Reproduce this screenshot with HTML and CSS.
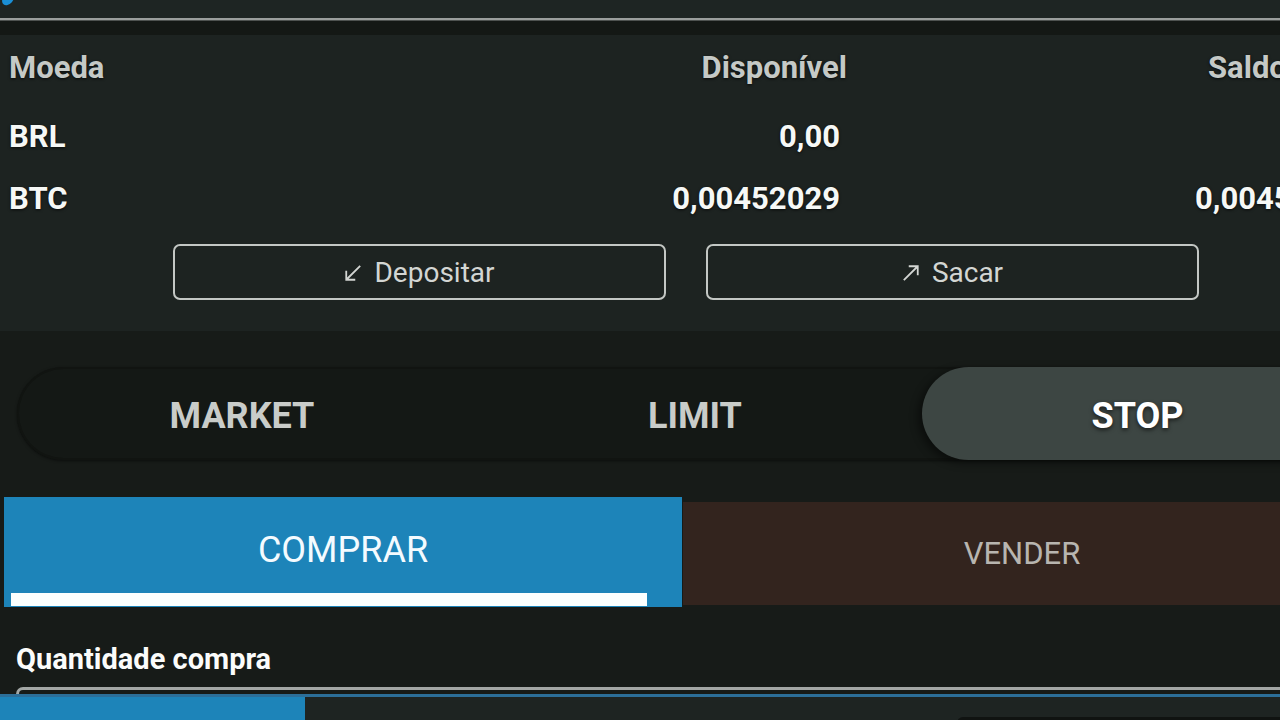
FILE: index.html
```html
<!DOCTYPE html>
<html lang="pt-BR">
<head>
<meta charset="utf-8">
<title>Carteira</title>
<link rel="stylesheet" href="styles.css">
</head>
<body>
<div class="topbar"><div class="blob"></div></div>
<div class="rule"></div>
<div class="gap"></div>

<section class="wallet">
  <div class="balances">
    <div class="hdr">Moeda</div>
    <div class="hdr num">Disponível</div>
    <div class="hdr saldo">Saldo</div>

    <div class="val">BRL</div>
    <div class="val num">0,00</div>
    <div class="val saldo"></div>

    <div class="val">BTC</div>
    <div class="val num">0,00452029</div>
    <div class="val saldo">0,00452029</div>
  </div>
  <div class="actions">
    <button class="act">
      <svg class="arrow" viewBox="0 0 20 20" width="20" height="20"><path d="M18 2 L2.5 17.5 M2.5 7.5 V17.5 H12.5" fill="none" stroke="currentColor" stroke-width="2"/></svg>
      Depositar
    </button>
    <button class="act">
      <svg class="arrow" viewBox="0 0 20 20" width="20" height="20"><path d="M2 18 L17.5 2.5 M7.5 2.5 H17.5 V12.5" fill="none" stroke="currentColor" stroke-width="2"/></svg>
      Sacar
    </button>
  </div>
</section>

<div class="modes">
  <div class="mode">MARKET</div>
  <div class="mode">LIMIT</div>
  <div class="mode active">STOP</div>
</div>

<div class="tabs">
  <div class="tab buy">
    <div class="tab-label">COMPRAR</div>
    <div class="indicator"></div>
  </div>
  <div class="tab sell">VENDER</div>
</div>

<div class="field-label">Quantidade compra</div>
<div class="input"></div>

<div class="sheet">
  <div class="sheet-left"></div>
  <div class="sheet-right"><div class="sheet-knob"></div></div>
</div>
</body>
</html>
```

FILE: styles.css
```css
html, body {
  margin: 0;
  padding: 0;
}
body {
  width: 1280px;
  height: 720px;
  overflow: hidden;
  background: #171b18;
  font-family: Roboto, "Noto Sans", "Liberation Sans", sans-serif;
}

.topbar {
  height: 18px;
  background: #1e2523;
  overflow: hidden;
}
.blob {
  width: 10px;
  height: 14px;
  margin: -8px 0 0 3px;
  background: #1a8fd6;
  border-radius: 50%;
  transform: rotate(40deg);
}
.rule {
  height: 3px;
  background: #9a9e9c;
  border-bottom: 1px solid #4e5250;
  box-sizing: border-box;
}
.gap {
  height: 14px;
  background: #141815;
}

.wallet {
  height: 296px;
  background: #1d2321;
}
.balances {
  display: grid;
  grid-template-columns: 300px 538px 500px;
  grid-template-rows: 71px 62px 62px;
  padding-left: 9px;
  width: 1400px;
}
.hdr {
  line-height: 64px;
  height: 64px;
  padding-top: 1px;
  font-size: 31px;
  font-weight: 700;
  color: #c5c9c6;
  text-shadow: 0 1px 3px rgba(0, 0, 0, 0.7);
}
.val {
  line-height: 62px;
  font-size: 31px;
  font-weight: 700;
  color: #f6f8f6;
  text-shadow: 0 1px 3px rgba(0, 0, 0, 0.7);
}
.num { text-align: right; }
.val.num { padding-right: 7px; }
.saldo { padding-left: 361px; }
.val.saldo { padding-left: 348px; }

.actions {
  display: flex;
  gap: 40px;
  padding-left: 173px;
  margin-top: 14px;
}
.act {
  width: 493px;
  height: 56px;
  box-sizing: border-box;
  border: 2px solid #c3c7c4;
  border-radius: 7px;
  background: transparent;
  color: #d3d6d3;
  font-family: Roboto, "Noto Sans", sans-serif;
  font-size: 28px;
  font-weight: 400;
  display: flex;
  align-items: center;
  justify-content: center;
  gap: 12px;
  padding: 0;
}
.arrow {
  width: 18px;
  height: 18px;
  margin-top: 1px;
}

.modes {
  margin: 36px 0 0 17px;
  width: 1350px;
  height: 93px;
  border-radius: 47px;
  background: #141815;
  box-shadow: inset 0 0 0 2px #111411, 0 1px 3px rgba(0, 0, 0, 0.5);
  display: grid;
  grid-template-columns: repeat(3, 1fr);
}
.mode {
  display: flex;
  align-items: center;
  justify-content: center;
  padding-top: 5px;
  font-size: 36px;
  font-weight: 700;
  color: #c9ccc9;
  border-radius: 47px;
}
.mode:nth-child(2) { padding-left: 6px; }
.mode.active {
  margin-left: 5px;
  padding-right: 14px;
  background: #3d4643;
  color: #ffffff;
  text-shadow: 0 2px 4px rgba(0, 0, 0, 0.6);
  box-shadow: -4px 3px 8px rgba(0, 0, 0, 0.45);
}

.tabs {
  display: flex;
  margin: 37px 0 0 4px;
  height: 110px;
  width: 1400px;
}
.tab {
  box-sizing: border-box;
}
.buy {
  width: 678px;
  height: 110px;
  background: #1d84b9;
  display: flex;
  flex-direction: column;
}
.tab-label {
  flex: 1;
  display: flex;
  align-items: center;
  justify-content: center;
  padding-top: 10px;
  font-size: 36px;
  font-weight: 400;
  color: #f4fbff;
}
.indicator {
  height: 13px;
  margin: 0 35px 1px 7px;
  background: #fbfffe;
}
.sell {
  width: 678px;
  margin: 5px 0 0 1px;
  height: 103px;
  background: #33241e;
  display: flex;
  align-items: center;
  justify-content: center;
  font-size: 31px;
  font-weight: 400;
  color: #b8b5b0;
}

.field-label {
  margin: 35px 0 0 16px;
  font-size: 29px;
  line-height: 34px;
  font-weight: 700;
  color: #fbfcfb;
}
.input {
  margin: 11px 0 0 16px;
  height: 4px;
  border-top: 3px solid #a3a7a5;
  border-left: 3px solid #a3a7a5;
  border-top-left-radius: 9px;
}
.sheet {
  display: flex;
  border-top: 3px solid #2c6f99;
  height: 26px;
}
.sheet-left {
  width: 305px;
  background: #1d84b9;
}
.sheet-right {
  flex: 1;
  background: #1e2422;
  display: flex;
  padding-left: 652px;
  align-items: flex-end;
}
.sheet-knob {
  flex: 1;
  height: 6px;
  background: #101311;
  border-top-left-radius: 8px;
}
```
